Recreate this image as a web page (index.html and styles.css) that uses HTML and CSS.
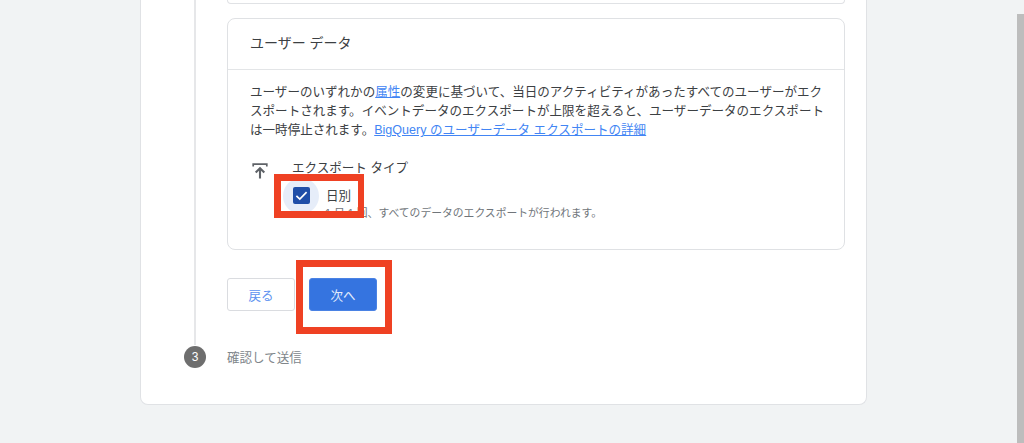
FILE: index.html
```html
<!DOCTYPE html>
<html lang="ja">
<head>
<meta charset="utf-8">
<title>ユーザー データ</title>
<link rel="stylesheet" href="styles.css">
</head>
<body>
<div class="page">
  <main class="panel">
    <div class="step-body">
      <div class="prev-card"></div>
      <section class="card">
        <h2 class="card-title">ユーザー データ</h2>
        <div class="card-content">
          <p class="desc">ユーザーのいずれかの<a href="#">属性</a>の変更に基づいて、当日のアクティビティがあったすべてのユーザーがエクスポートされます。イベントデータのエクスポートが上限を超えると、ユーザーデータのエクスポートは一時停止されます。<a href="#">BigQuery のユーザーデータ エクスポートの詳細</a></p>
          <div class="export">
            <svg class="export-icon" viewBox="0 0 18 18" width="18" height="18"><path d="M2.2 4.6V2.1h13.6v2.5" fill="none" stroke="#5f6368" stroke-width="1.7"/><path d="M9 16.5V7M4.7 10.6 9 6.3l4.3 4.3" fill="none" stroke="#5f6368" stroke-width="2.1"/></svg>
            <div class="export-main">
              <div class="export-title">エクスポート タイプ</div>
              <div class="option">
                <span class="halo"><span class="check"><svg viewBox="0 0 16 16" width="16" height="16"><path d="M3.2 8.3 6.4 11.4 12.8 4.9" fill="none" stroke="#fff" stroke-width="1.6"/></svg></span></span>
                <span class="option-label">日別</span>
              </div>
              <div class="option-hint">1 日 1 回、すべてのデータのエクスポートが行われます。</div>
            </div>
          </div>
        </div>
      </section>
      <div class="actions">
        <button class="btn btn-back">戻る</button>
        <button class="btn btn-next">次へ</button>
      </div>
    </div>
    <div class="step-3">
      <span class="step-num">3</span>
      <span class="step-label">確認して送信</span>
    </div>
  </main>
  <div class="scrollbar"></div>
</div>
<div class="mark mark-check"></div>
<div class="mark mark-next"></div>
</body>
</html>
```
FILE: styles.css
```css
* { box-sizing: border-box; }
html, body { margin: 0; height: 443px; overflow: hidden; }
body {
  background: #f1f3f4;
  font-family: "Liberation Sans", "Noto Sans CJK JP", sans-serif;
  color: #3c4043;
}
.page { height: 443px; display: flex; justify-content: flex-start; }
.panel {
  width: 727px;
  height: 405px;
  margin-left: 140px;
  background: #fff;
  border: 1px solid #e0e2e5;
  border-top: 0;
  border-radius: 0 0 8px 8px;
  padding-left: 43px;
}
.step-body {
  height: 345px;
  margin-left: 10px;
  border-left: 2px solid #e6e7e9;
  padding-left: 31px;
  width: 651px;
}
.prev-card {
  width: 618px;
  height: 4px;
  border: 1px solid #e0e2e5;
  border-top: 0;
  border-radius: 0 0 8px 8px;
  margin-bottom: 14px;
}
.card {
  width: 618px;
  height: 232px;
  border: 1px solid #dfe1e4;
  border-radius: 8px;
}
.card-title {
  margin: 0;
  height: 51px;
  padding: 14px 22px 0;
  font-size: 14px;
  line-height: 20px;
  font-weight: 400;
  border-bottom: 1px solid #e3e5e7;
  color: #3c4043;
}
.card-content { padding: 13px 12px 0 22px; }
.desc {
  margin: 0;
  font-size: 12.55px;
  line-height: 19px;
  color: #3c4043;
}
.desc a { color: #4285f4; text-decoration: underline; }
.export { display: flex; margin-top: 19px; }
.export-icon { margin: 3px 0 0 1px; flex: none; }
.export-main { margin-left: 23px; }
.export-title { font-size: 12.55px; line-height: 18px; color: #3c4043; }
.option { display: flex; align-items: center; height: 33px; margin-left: -9px; margin-top: 2px; }
.halo {
  width: 36px; height: 36px; border-radius: 50%;
  background: #e6edf9;
  display: flex; align-items: center; justify-content: center;
  flex: none;
}
.check {
  width: 17px; height: 17px; border-radius: 2px;
  background: #1f4ea8;
  display: block;
}
.check svg { display: block; width: 17px; height: 17px; }
.option-label { font-size: 12.55px; margin-left: 7px; margin-top: -2px; color: #3c4043; }
.option-hint { font-size: 10.8px; line-height: 14px; color: #70757a; margin-left: 33px; margin-top: -6px; }
.actions { display: flex; gap: 14px; margin-top: 28px; }
.btn {
  width: 68px; height: 33px;
  border-radius: 3px;
  font: inherit;
  font-size: 12.55px;
  padding: 0;
}
.btn-back { background: #fff; border: 1px solid #dadce0; color: #5c92f0; }
.btn-next { background: #3574e0; border: 1px solid #4a82e4; color: #e3ecfb; }
.step-3 { display: flex; align-items: center; margin-top: 1px; height: 22px; }
.step-num {
  width: 22px; height: 22px; border-radius: 50%;
  background: #6e6e6e; color: #fff;
  font-size: 12px;
  display: flex; align-items: center; justify-content: center;
}
.step-label { margin-left: 21px; margin-top: -2px; font-size: 12.55px; color: #80868b; }
.scrollbar {
  position: absolute;
  left: 1017px; top: 14px;
  width: 7px; height: 429px;
  background: #bdbdbd;
}
.mark { position: absolute; border: 7px solid #ef4123; }
.mark-check { left: 274px; top: 174px; width: 90px; height: 44px; border-right-width: 6px; }
.mark-next { left: 296px; top: 260px; width: 96px; height: 74px; }
```
